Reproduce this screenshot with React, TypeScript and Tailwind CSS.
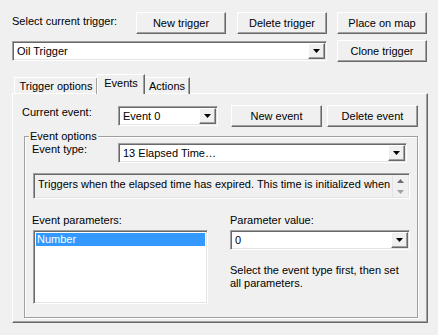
import type { ReactNode } from "react";

const raised =
    "border border-t-white border-l-white border-r-[#696969] border-b-[#696969] shadow-[inset_-1px_-1px_0_#a0a0a0] bg-[#f0f0f0]";
const sunken =
    "border border-t-[#a0a0a0] border-l-[#a0a0a0] border-r-white border-b-white shadow-[inset_1px_1px_0_#696969,inset_-1px_-1px_0_#e3e3e3]";

function Button({ children, className = "" }: { children: ReactNode; className?: string }) {
    return (
        <div className={`${raised} flex items-center justify-center text-black ${className}`}>
            {children}
        </div>
    );
}

function Arrow() {
    return (
        <div className={`${raised} flex h-full w-[17px] shrink-0 items-center justify-center`}>
            <svg width="7" height="4" viewBox="0 0 7 4">
                <polygon points="0,0 7,0 3.5,4" fill="#000" />
            </svg>
        </div>
    );
}

function Combo({ value, className = "" }: { value: string; className?: string }) {
    return (
        <div className={`${sunken} flex bg-white p-px ${className}`}>
            <span className="flex-1 truncate pl-[3px] leading-[16px]">{value}</span>
            <Arrow />
        </div>
    );
}

export default function App() {
    return (
        <div className="h-[335px] w-[438px] overflow-hidden bg-[#f0f0f0] pl-3 pt-[12px] font-['Liberation_Sans',Arial,sans-serif] text-[11px] leading-[13px] text-black">
            {/* trigger buttons */}
            <div className="flex h-[22px] items-start">
                <span className="mt-[3px] w-[124px]">Select current trigger:</span>
                <Button className="h-[22px] w-[90px]">New trigger</Button>
                <Button className="ml-[11px] h-[22px] w-[90px]">Delete trigger</Button>
                <Button className="ml-[10px] h-[22px] w-[90px]">Place on map</Button>
            </div>
            <div className="mt-[6px] flex items-center">
                <Combo value="Oil Trigger" className="h-[20px] w-[315px]" />
                <Button className="ml-[10px] h-[22px] w-[90px]">Clone trigger</Button>
            </div>

            {/* tabs */}
            <div className="relative z-10 mt-[12px] -mb-px flex h-[20px] items-end pl-[2px]">
                <div className="flex h-[17px] w-[83px] items-center justify-center border-l border-t border-white shadow-[inset_-1px_0_0_#a0a0a0]">
                    Trigger options
                </div>
                <div className="flex h-[20px] w-[48px] items-start justify-center border-l border-t border-r border-l-white border-t-white border-r-[#696969] bg-[#f0f0f0] pt-[2px] shadow-[inset_-1px_0_0_#a0a0a0]">
                    Events
                </div>
                <div className="flex h-[17px] w-[45px] items-center justify-center border-t border-r border-t-white border-r-[#696969] shadow-[inset_-1px_0_0_#a0a0a0]">
                    Actions
                </div>
            </div>

            {/* tab panel */}
            <div className="h-[230px] w-[416px] border border-t-white border-l-white border-r-[#696969] border-b-[#696969] shadow-[inset_-1px_-1px_0_#a0a0a0]">
                <div className="mt-[11px] flex items-start pl-[9px]">
                    <span className="mt-px w-[96px]">Current event:</span>
                    <Combo value="Event 0" className="mt-px h-[20px] w-[100px]" />
                    <Button className="ml-[13px] h-[22px] w-[91px]">New event</Button>
                    <Button className="ml-[5px] h-[22px] w-[91px]">Delete event</Button>
                </div>

                {/* group box */}
                <div className="relative ml-[11px] mt-[9px] h-[182px] w-[394px] border border-[#a0a0a0] shadow-[inset_1px_1px_0_#fff,1px_1px_0_#fff]">
                    <span className="absolute -top-[7px] left-[4px] bg-[#f0f0f0] px-px">Event options</span>
                    <div className="mt-[6px] flex">
                        <span className="w-[93px] pl-[7px]">Event type:</span>
                        <Combo value="13 Elapsed Time…" className="h-[20px] w-[289px]" />
                    </div>
                    <div className={`${sunken} ml-[8px] mt-[10px] flex h-[26px] w-[377px] bg-[#f0f0f0] p-px`}>
                        <span className="flex-1 overflow-hidden whitespace-nowrap pl-[3px] pt-[3px]">
                            Triggers when the elapsed time has expired. This time is initialized when
                        </span>
                        <div className="flex w-[16px] flex-col items-center justify-center gap-[7px] border-l border-[#e3e3e3]">
                            <svg width="7" height="4" viewBox="0 0 7 4">
                                <polygon points="3.5,0 7,4 0,4" fill="#6d6d6d" />
                            </svg>
                            <svg width="7" height="4" viewBox="0 0 7 4">
                                <polygon points="0,0 7,0 3.5,4" fill="#a0a0a0" />
                            </svg>
                        </div>
                    </div>

                    <div className="mt-[15px] flex">
                        <div className="ml-[7px] w-[176px]">
                            <div className="h-[13px]">Event parameters:</div>
                            <div className={`${sunken} ml-px mt-[3px] h-[74px] w-[175px] bg-white p-[2px]`}>
                                <div className="h-[13px] bg-[#3399ff] pl-px text-white">Number</div>
                            </div>
                        </div>
                        <div className="ml-[22px] w-[181px]">
                            <div className="h-[13px]">Parameter value:</div>
                            <Combo value="0" className="mt-[3px] h-[20px] w-[180px]" />
                            <p className="mt-[14px]">
                                Select the event type first, then set
                                <br />
                                all parameters.
                            </p>
                        </div>
                    </div>
                </div>
            </div>
        </div>
    );
}
